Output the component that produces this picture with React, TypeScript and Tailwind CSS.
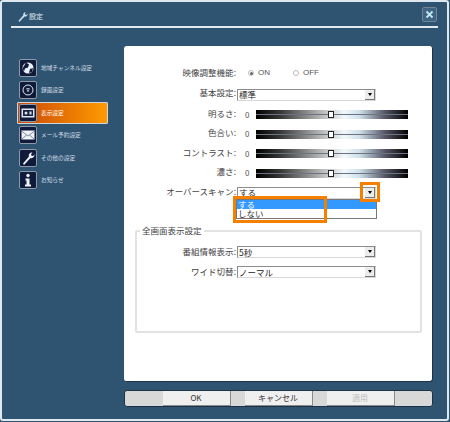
const font = { fontFamily: '"Noto Sans CJK JP", "Liberation Sans", sans-serif' };

function IconBox({ children }: { children: React.ReactNode }) {
  return (
    <div className="w-[18px] h-[18px] shrink-0 bg-[#101a3a] border border-[#8f9aa6] rounded-[2px] flex items-center justify-center">
      <svg width="14" height="14" viewBox="0 0 14 14">{children}</svg>
    </div>
  );
}

const menu: { label: string; icon: React.ReactNode; on?: boolean }[] = [
  { label: "地域チャンネル設定", icon: <><circle cx="7" cy="7" r="5.5" fill="#e8eef4" /><path d="M5 1.5l3 2-1 3-3 1-1 3-1.5-3zM9 8l3-1-1 4-3 1z" fill="#101a3a" /></> },
  { label: "録画設定", icon: <><circle cx="7" cy="7" r="5" fill="none" stroke="#dfe6ee" strokeWidth="1" /><path d="M5.7 5.5h2.6L7 8.8z" fill="none" stroke="#dfe6ee" strokeWidth=".7" /></> },
  { label: "表示設定", on: true, icon: <><rect x=".5" y="2.5" width="13" height="9" fill="#dfe6ee" /><rect x="2" y="4" width="10" height="6" fill="#1a2140" /><circle cx="5" cy="7" r="1.5" fill="#dfe6ee" /><rect x="8.5" y="5.5" width="2" height="3" fill="#dfe6ee" /></> },
  { label: "メール予約設定", icon: <><rect x=".5" y="2.5" width="13" height="9" fill="#eef2f6" /><path d="M.5 3l6.5 5 6.5-5M.5 11.5l5-4.5M13.5 11.5l-5-4.5" fill="none" stroke="#66758a" strokeWidth=".8" /></> },
  { label: "その他の設定", icon: <path d="M2 12.5l6-7c-.7-2 .7-4 3.5-4L10 3.3l.6 1.4 1.6.3 1.3-1.7c.3 2.800-2 4.500-4 3.700l-6.500 7z" fill="#eef2f6" /> },
  { label: "お知らせ", icon: <><circle cx="7" cy="2.500" r="1.700" fill="#eef2f6" /><path d="M4.500 5.500h4v6h1.500v2H4v-2h1.500v-4h-1z" fill="#eef2f6" /></> },
];

function Select({ value }: { value: string }) {
  return (
    <div className="w-[139px] h-[12px] bg-white border border-t-[#8c8c8c] border-l-[#8c8c8c] border-r-[#d8d8d8] border-b-[#d8d8d8] flex items-center justify-between">
      <span className="pl-[1px] text-[8.500px] leading-none text-[#222]">{value}</span>
      <span className="w-[10px] h-[10px] bg-[#ececec] border-r border-b border-[#777] flex items-center justify-center">
        <span className="block w-0 h-0 border-x-[2px] border-x-transparent border-t-[3px] border-t-black" />
      </span>
    </div>
  );
}

function Row({ label, children, h = "h-[19.500px]", lift = "pb-[4px]" }: { label: string; children: React.ReactNode; h?: string; lift?: string }) {
  return (
    <div className={`flex items-center ${h}`}>
      <div className={`w-[102px] text-right text-[8.500px] leading-none text-[#444] whitespace-nowrap pr-px ${lift}`}>{label}:</div>
      {children}
    </div>
  );
}

function Slider({ label }: { label: string }) {
  return (
    <Row label={label}>
      <span className="w-[18px] pl-[8px] text-[8px] leading-none text-[#555]">0</span>
      <div className="relative w-[152px] h-[9px] ml-[1px] bg-[linear-gradient(90deg,#000_0%,#333_15%,#aaa_40%,#f2f8fc_58%,#cfe0ea_68%,#556_85%,#000_100%)]">
        <div className="absolute left-0 right-0 top-[4px] h-px bg-[#6b7480]" />
        <div className="absolute left-[72px] top-[1px] w-[6px] h-[7px] bg-white border-[1.500px] border-[#222]" />
      </div>
    </Row>
  );
}

function Radio({ on, label }: { on?: boolean; label: string }) {
  return (
    <span className="flex items-center gap-[4px] text-[8px] leading-none text-[#555]" style={{ fontFamily: '"Liberation Sans", sans-serif' }}>
      <span className="w-[6px] h-[6px] rounded-full border border-[#bbb] bg-white flex items-center justify-center">
        {on && <span className="w-[3px] h-[3px] rounded-full bg-[#666]" />}
      </span>
      {label}
    </span>
  );
}

function Btn({ label, disabled }: { label: string; disabled?: boolean }) {
  return (
    <div className={`w-[68px] h-[14.500px] bg-[#efefef] border-r border-b border-[#8a8a8a] flex items-center justify-center text-[8px] leading-none ${disabled ? "text-[#bdbdbd]" : "text-[#333]"}`}>
      {label}
    </div>
  );
}

export default function App() {
  return (
    <div style={font} className="w-[450px] h-[422px] bg-[#2f5472] overflow-hidden">
      <div className="relative w-[449px] h-[421px] border-[2px] border-[#dfe8ee] rounded-[3px] pt-[5px] px-[9px] flex flex-col">
        <div className="flex items-center h-[19px] pl-[6px] pr-[1px]">
          <svg width="11" height="11" viewBox="0 0 14 14"><path d="M2 12.500l6-7c-.7-2 .7-4 3.500-4L10 3.300l.6 1.400 1.600.3 1.300-1.700c.3 2.800-2 4.500-4 3.700l-6.500 7z" fill="#cfe3f2" /></svg>
          <span className="ml-[1px] text-[7px] leading-none text-[#e6edf3]">設定</span>
          <div className="ml-auto w-[15px] h-[15px] -mt-[4px] bg-[#3f6480] border border-[#6f8698] rounded-[2px] flex items-center justify-center">
            <svg width="9" height="9" viewBox="0 0 9 9"><path d="M1.500 1.500l6 6M7.500 1.500l-6 6" stroke="#bfe6f7" strokeWidth="1.800" /></svg>
          </div>
        </div>
        <div className="h-[2px] w-[427px] bg-[#e3eaef]" />
        <div className="flex mt-[18px]">
          <div className="w-[113px] pl-[6px] pt-[10.500px] flex flex-col">
            {menu.map((m) => (
              <div key={m.label} className={`flex items-center h-[22.500px] w-[91px] ${m.on ? "bg-[linear-gradient(90deg,#c94a08,#ff9a00)] border border-[#cfd6dc] rounded-[1px] pl-[1px]" : "pl-[2px]"}`}>
                <IconBox>{m.icon}</IconBox>
                <span className={`ml-[4px] text-[5.700px] leading-none whitespace-nowrap ${m.on ? "text-white" : "text-[#d5dee6]"}`}>{m.label}</span>
              </div>
            ))}
          </div>
          <div className="flex flex-col">
            <div className="relative w-[309px] h-[336px] bg-white rounded-[3px] border-r border-b border-[#1d3345] pt-[16px] pl-[11px]">
              <Row label="映像調整機能" h="h-[22px]" lift="pb-[1px]">
                <div className="flex items-center pl-[11px] gap-[23px]"><Radio on label="ON" /><Radio label="OFF" /></div>
              </Row>
              <Row label="基本設定" h="h-[21px]" lift="pb-[5px]"><Select value="標準" /></Row>
              <Slider label="明るさ" />
              <Slider label="色合い" />
              <Slider label="コントラスト" />
              <Slider label="濃さ" />
              <Row label="オーバースキャン" h="h-[19px]" lift="pb-[2px]"><Select value="する" /></Row>
              <div className="relative mt-[28px] w-[287px] h-[103px] border-2 border-[#e2e2e2] rounded-[2px] pt-[10px]">
                <span className="absolute left-[3px] -top-[8px] bg-white px-[2px] text-[8.500px] leading-[12px] text-[#444]">全画面表示設定</span>
                <div className="-ml-[2px]">
                  <Row label="番組情報表示" h="h-[20px]" lift="pb-[2px]"><Select value="5秒" /></Row>
                  <Row label="ワイド切替" h="h-[20px]" lift="pb-[2px]"><Select value="ノーマル" /></Row>
                </div>
              </div>
              <div className="absolute left-[112px] top-[153px] w-[141px] h-[20px] bg-white border border-[#777] text-[8.500px] leading-[9px] text-[#333]">
                <div className="bg-[#3399ff] text-white pl-px h-[9px]">する</div>
                <div className="pl-px">しない</div>
              </div>
              <div className="absolute left-[109px] top-[150px] w-[94px] h-[27px] border-[3px] border-[#f58000]" />
              <div className="absolute left-[236px] top-[136px] w-[20px] h-[20px] border-[3px] border-[#f58000]" />
            </div>
            <div className="mt-[8px] w-[309px] h-[16.500px] bg-[#d8d8d8] border border-[#1d3345] rounded-[3px] flex items-start justify-center gap-[14px]">
              <Btn label="OK" /><Btn label="キャンセル" /><Btn label="適用" disabled />
            </div>
          </div>
        </div>
      </div>
    </div>
  );
}
